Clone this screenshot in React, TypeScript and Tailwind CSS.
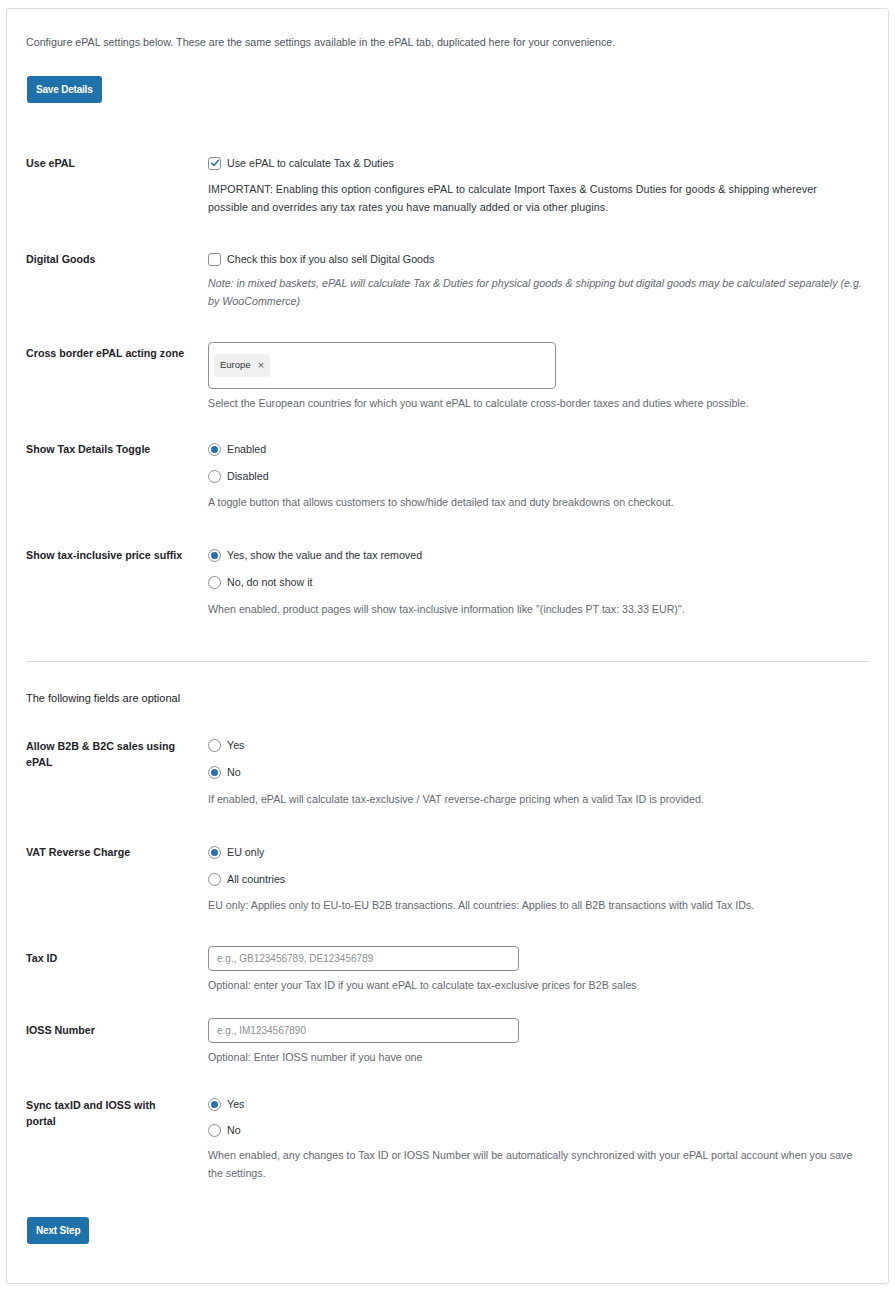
import React from "react";

const font = { fontFamily: '"Liberation Sans", Arial, sans-serif' };

const Radio = ({ checked, label }: { checked?: boolean; label: string }) => (
  <label className="flex items-center h-[18px] gap-[6px] text-[#2c3338]">
    <span className="flex items-center justify-center w-[13px] h-[13px] rounded-full border border-[#8c8f94] bg-white">
      {checked && <span className="w-[7px] h-[7px] rounded-full bg-[#2271b1]" />}
    </span>
    <span>{label}</span>
  </label>
);

const Checkbox = ({ checked, label }: { checked?: boolean; label: string }) => (
  <label className="flex items-center h-[18px] gap-[6px] text-[#2c3338]">
    <span className="flex items-center justify-center w-[13px] h-[13px] rounded-[3px] border border-[#8c8f94] bg-white">
      {checked && (
        <svg viewBox="0 0 12 12" className="w-[10px] h-[10px]">
          <path d="M2 6.2 L4.8 9 L10 2.8" fill="none" stroke="#2271b1" strokeWidth="1.8" strokeLinecap="round" strokeLinejoin="round" />
        </svg>
      )}
    </span>
    <span>{label}</span>
  </label>
);

const Row = ({ label, className = "", children }: { label: React.ReactNode; className?: string; children: React.ReactNode }) => (
  <div className={`flex ${className}`}>
    <div className="w-[182px] shrink-0 pr-4 font-bold text-[#1d2327] leading-[16px] pt-[1px]">{label}</div>
    <div className="flex-1">{children}</div>
  </div>
);

const Help = ({ children, className = "" }: { children: React.ReactNode; className?: string }) => (
  <p className={`text-[#646970] leading-[18px] ${className}`}>{children}</p>
);

export default function App() {
  return (
    <div className="bg-white min-h-[1311px] pt-[8px] pl-[6px] pr-[6px] text-[10.7px]" style={font}>
      <div className="border border-[#dcdcde] rounded-[3px] shadow-[0_1px_2px_rgba(0,0,0,0.06)] pl-[19px] pr-[19px] pt-[24px] pb-[38px] h-[1276px]">
        <p className="text-[#50575e] leading-[18px]">
          Configure ePAL settings below. These are the same settings available in the ePAL tab, duplicated here for your convenience.
        </p>
        <button className="mt-[25px] h-[27px] px-[9px] ml-[1px] bg-[#1f72a9] rounded-[3px] text-white font-bold text-[10px] tracking-[-0.2px]">
          Save Details
        </button>

        <Row label="Use ePAL" className="mt-[51px]">
          <Checkbox checked label="Use ePAL to calculate Tax & Duties" />
          <p className="mt-[8px] text-[#2c3338] leading-[18px] tracking-[0.1px]">
            IMPORTANT: Enabling this option configures ePAL to calculate Import Taxes &amp; Customs Duties for goods &amp; shipping wherever
            <br />
            possible and overrides any tax rates you have manually added or via other plugins.
          </p>
        </Row>

        <Row label="Digital Goods" className="mt-[34px]">
          <Checkbox label="Check this box if you also sell Digital Goods" />
          <Help className="mt-[6px] italic">
            Note: in mixed baskets, ePAL will calculate Tax &amp; Duties for physical goods &amp; shipping but digital goods may be calculated separately (e.g.
            <br />
            by WooCommerce)
          </Help>
        </Row>

        <Row label={<span className="block pt-[2px]">Cross border ePAL acting zone</span>} className="mt-[32px]">
          <div className="w-[348px] h-[47px] border border-[#8c8f94] rounded-[4px] flex items-center px-[5px]">
            <span className="h-[23px] px-[6px] bg-[#f0f0f1] rounded-[2px] flex items-center gap-[7px] text-[9.5px] text-[#2c3338]">
              Europe <span className="text-[#50575e] text-[11px] leading-none">×</span>
            </span>
          </div>
          <Help className="mt-[5px]">Select the European countries for which you want ePAL to calculate cross-border taxes and duties where possible.</Help>
        </Row>

        <Row label="Show Tax Details Toggle" className="mt-[28px]">
          <div className="flex flex-col gap-[9px]">
            <Radio checked label="Enabled" />
            <Radio label="Disabled" />
          </div>
          <Help className="mt-[8px]">A toggle button that allows customers to show/hide detailed tax and duty breakdowns on checkout.</Help>
        </Row>

        <Row label="Show tax-inclusive price suffix" className="mt-[35px]">
          <div className="flex flex-col gap-[9px]">
            <Radio checked label="Yes, show the value and the tax removed" />
            <Radio label="No, do not show it" />
          </div>
          <Help className="mt-[9px]">When enabled, product pages will show tax-inclusive information like "(includes PT tax: 33.33 EUR)".</Help>
        </Row>

        <hr className="mt-[43px] border-0 border-t border-[#dcdcde]" />

        <p className="mt-[27px] text-[11px] leading-[18px] text-[#1d2327]">The following fields are optional</p>

        <Row label={<span className="block pt-[1px]">Allow B2B &amp; B2C sales using<br />ePAL</span>} className="mt-[29px]">
          <div className="flex flex-col gap-[9px]">
            <Radio label="Yes" />
            <Radio checked label="No" />
          </div>
          <Help className="mt-[9px]">If enabled, ePAL will calculate tax-exclusive / VAT reverse-charge pricing when a valid Tax ID is provided.</Help>
        </Row>

        <Row label="VAT Reverse Charge" className="mt-[35px]">
          <div className="flex flex-col gap-[9px]">
            <Radio checked label="EU only" />
            <Radio label="All countries" />
          </div>
          <Help className="mt-[8px]">EU only: Applies only to EU-to-EU B2B transactions. All countries: Applies to all B2B transactions with valid Tax IDs.</Help>
        </Row>

        <Row label={<span className="block pt-[3px]">Tax ID</span>} className="mt-[32px]">
          <input
            className="w-[311px] h-[25px] border border-[#8c8f94] rounded-[4px] px-[8px] text-[10px] placeholder:text-[#8c8f94] outline-none"
            placeholder="e.g., GB123456789, DE123456789"
            style={font}
          />
          <Help className="mt-[5px]">Optional: enter your Tax ID if you want ePAL to calculate tax-exclusive prices for B2B sales</Help>
        </Row>

        <Row label={<span className="block pt-[3px]">IOSS Number</span>} className="mt-[24px]">
          <input
            className="w-[311px] h-[25px] border border-[#8c8f94] rounded-[4px] px-[8px] text-[10px] placeholder:text-[#8c8f94] outline-none"
            placeholder="e.g., IM1234567890"
            style={font}
          />
          <Help className="mt-[5px]">Optional: Enter IOSS number if you have one</Help>
        </Row>

        <Row label={<span className="block pt-[1px]">Sync taxID and IOSS with<br />portal</span>} className="mt-[29px]">
          <div className="flex flex-col gap-[8px]">
            <Radio checked label="Yes" />
            <Radio label="No" />
          </div>
          <Help className="mt-[7px]">
            When enabled, any changes to Tax ID or IOSS Number will be automatically synchronized with your ePAL portal account when you save
            <br />
            the settings.
          </Help>
        </Row>

        <button className="mt-[35px] h-[27px] px-[9px] ml-[1px] bg-[#1f72a9] rounded-[3px] text-white font-bold text-[10px] tracking-[-0.2px]">
          Next Step
        </button>
      </div>
    </div>
  );
}
